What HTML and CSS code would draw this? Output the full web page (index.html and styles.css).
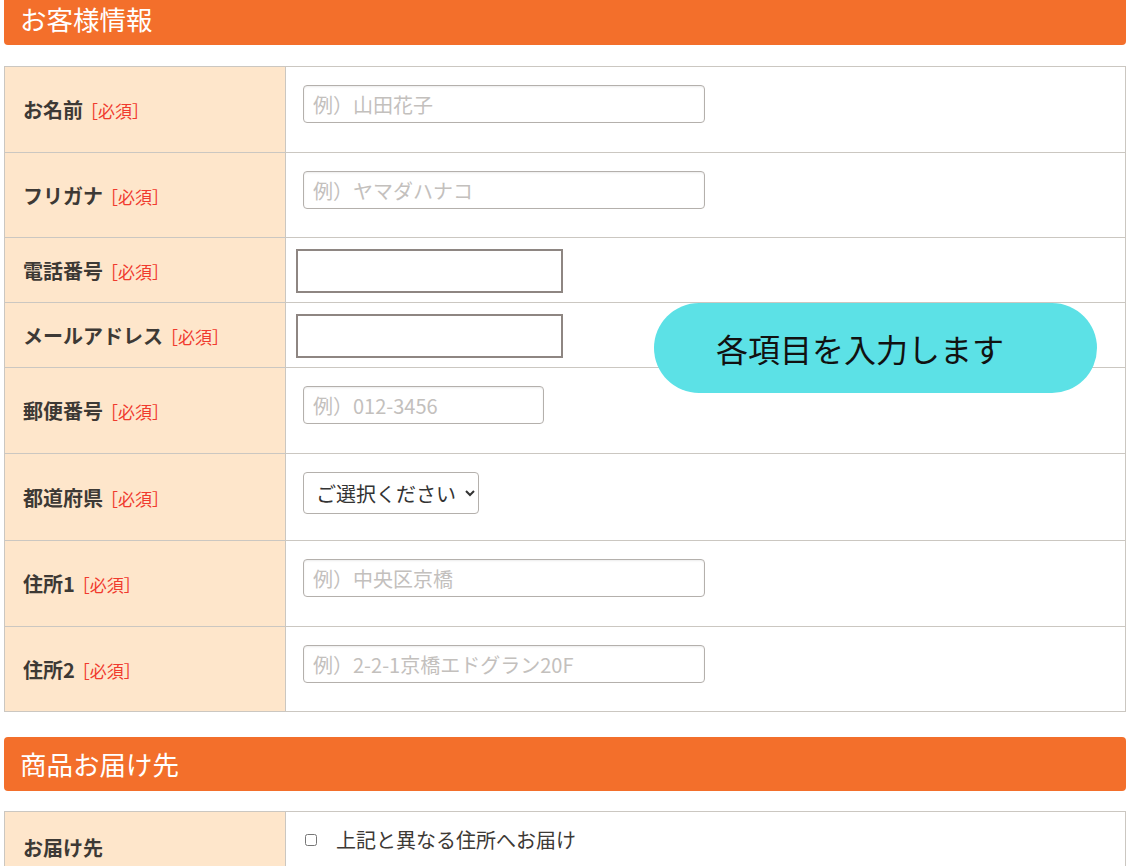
FILE: index.html
```html
<!DOCTYPE html>
<html lang="ja">
<head>
    <meta charset="UTF-8">
    <meta name="viewport" content="width=device-width, initial-scale=1.0">
    <title>ご注文フォーム</title>
    <link rel="stylesheet" href="styles.css">
</head>
<body>
    <div class="wrap">
        <h2 class="section-title first">お客様情報</h2>
        <table class="form-table">
            <tr>
                <th>お名前<span class="req">［必須］</span></th>
                <td><input class="text" type="text" placeholder="例）山田花子"></td>
            </tr>
            <tr>
                <th>フリガナ<span class="req">［必須］</span></th>
                <td class="tight"><input class="text" type="text" placeholder="例）ヤマダハナコ"></td>
            </tr>
            <tr>
                <th>電話番号<span class="req">［必須］</span></th>
                <td class="plain"><input class="box" type="text"></td>
            </tr>
            <tr>
                <th>メールアドレス<span class="req">［必須］</span></th>
                <td class="plain"><input class="box" type="text"></td>
            </tr>
            <tr>
                <th>郵便番号<span class="req">［必須］</span></th>
                <td><input class="text short" type="text" placeholder="例）012-3456"></td>
            </tr>
            <tr>
                <th>都道府県<span class="req">［必須］</span></th>
                <td class="sel">
                    <select class="pref">
                        <option>ご選択ください</option>
                    </select>
                </td>
            </tr>
            <tr>
                <th>住所1<span class="req">［必須］</span></th>
                <td><input class="text" type="text" placeholder="例）中央区京橋"></td>
            </tr>
            <tr>
                <th>住所2<span class="req">［必須］</span></th>
                <td class="tight"><input class="text" type="text" placeholder="例）2-2-1京橋エドグラン20F"></td>
            </tr>
        </table>

        <h2 class="section-title">商品お届け先</h2>
        <table class="form-table">
            <tr>
                <th>お届け先</th>
                <td>
                    <label class="check"><input type="checkbox">上記と異なる住所へお届け</label>
                </td>
            </tr>
        </table>

        <!-- 吹き出し -->
        <div class="balloon">各項目を入力します</div>
    </div>
</body>
</html>
```

FILE: styles.css
```css
* {
    box-sizing: border-box;
}
body {
    margin: 0;
    font-family: "Noto Sans CJK JP", "Noto Sans", sans-serif;
    color: #3d3935;
    background: #fff;
}
.wrap {
    position: relative;
    padding: 0 4px;
}
.section-title {
    margin: 0 0 20px;
    height: 54px;
    line-height: 54px;
    padding-left: 16px;
    background-color: #f36f2b;
    color: #fff;
    font-size: 26.5px;
    font-weight: 400;
    border-radius: 4px;
}
.section-title.first {
    margin-top: -7px;
    margin-bottom: 21px;
    height: 52px;
    line-height: 52px;
    border-radius: 0 0 4px 4px;
}
.form-table {
    width: 100%;
    border-collapse: collapse;
    table-layout: fixed;
    margin-bottom: 25px;
    border: 1px solid #cbc7c1;
}
.form-table th {
    width: 281px;
    background-color: #fee6cb;
    text-align: left;
    padding: 0 0 0 18px;
    font-size: 20px;
    font-weight: 700;
    border: 1px solid #cbc7c1;
    vertical-align: middle;
}
.form-table td {
    padding: 18px 17px 29px;
    border: 1px solid #cbc7c1;
}
.form-table td.tight {
    padding-bottom: 28px;
}
.form-table td.plain {
    padding: 11px 10px 9px;
}
.form-table td.sel {
    padding-bottom: 26px;
}
.req {
    color: #f03a2e;
    font-size: 17px;
    font-weight: 400;
    margin-left: -2px;
}
.text {
    display: block;
    width: 402px;
    height: 38px;
    padding: 0 9px;
    border: 1px solid #b4b0ac;
    border-radius: 4px;
    box-shadow: inset 0 1px 2px rgba(0, 0, 0, 0.08);
    font-family: inherit;
    font-size: 20px;
    color: #333;
}
.text::placeholder {
    color: #c3c0bd;
}
.text.short {
    width: 241px;
}
.box {
    display: block;
    width: 267px;
    height: 44px;
    border: 2px solid #8e8682;
    border-radius: 0;
    background: #fff;
}
.pref {
    display: block;
    width: 176px;
    height: 42px;
    padding: 0 0 0 8px;
    border: 1px solid #b4b0ac;
    border-radius: 4px;
    background: #fff;
    font-family: inherit;
    font-size: 20px;
    color: #333;
}
.check {
    display: flex;
    align-items: center;
    font-size: 20px;
    color: #3d3935;
    margin-top: -5px;
}
.check input {
    margin: 0 19px 0 2px;
    width: 12px;
    height: 12px;
}
.balloon {
    position: absolute;
    left: 654px;
    top: 310px;
    width: 443px;
    height: 90px;
    padding-left: 62px;
    border-radius: 45px;
    background-color: #5ce1e6;
    color: #111;
    font-size: 32px;
    line-height: 90px;
}
```
